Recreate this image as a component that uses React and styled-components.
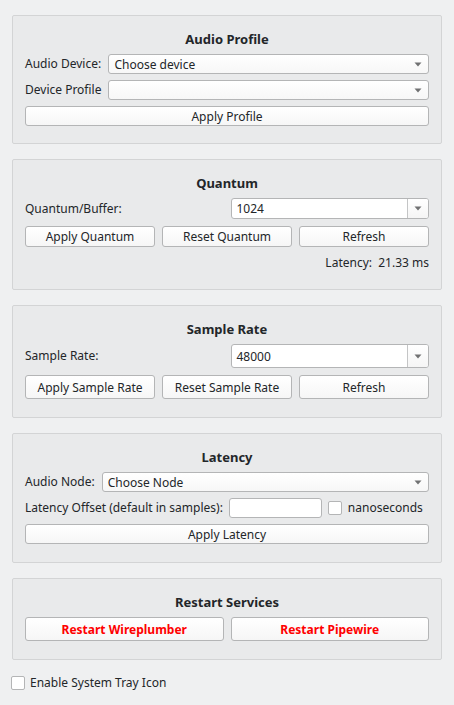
import React from "react";
import styled, { createGlobalStyle } from "styled-components";

const GlobalStyle = createGlobalStyle`
  html, body {
    margin: 0;
    padding: 0;
    background: #eff0f1;
  }
  body {
    font-family: "Noto Sans", "Open Sans", sans-serif;
    font-size: 12px;
    color: #232629;
  }
`;

const Window = styled.div`
  width: 454px;
  height: 705px;
  box-sizing: border-box;
  padding: 15px 12px 0 12px;
  display: flex;
  flex-direction: column;
  gap: 15px;
`;

const GroupBox = styled.section`
  background: #e9eaeb;
  border: 1px solid #d3d4d5;
  border-radius: 2px;
  padding: 15px 12px ${(p) => p.$pb || 18}px;
  display: flex;
  flex-direction: column;
  gap: 7px;
`;

const GroupTitle = styled.h3`
  margin: 0;
  font-size: 13px;
  font-weight: 700;
  line-height: 16px;
  text-align: center;
  color: #232629;
`;

const Stack = styled.div`
  display: flex;
  flex-direction: column;
  gap: ${(p) => p.$gap || 6}px;
`;

const FormGrid = styled.div`
  display: grid;
  grid-template-columns: auto 1fr;
  column-gap: 7px;
  row-gap: 6px;
  align-items: center;
`;

const Columns = styled.div`
  display: grid;
  grid-template-columns: repeat(${(p) => p.$cols}, 1fr);
  column-gap: 7px;
  align-items: center;
`;

const Row = styled.div`
  display: flex;
  align-items: center;
  gap: 6px;
  height: 20px;
`;

const Label = styled.span`
  white-space: nowrap;
  line-height: 16px;
`;

const control = `
  box-sizing: border-box;
  border: 1px solid #b4b5b6;
  border-radius: 3px;
  font-family: "Noto Sans", "Open Sans", sans-serif;
  font-size: 12px;
  color: #232629;
`;

const Button = styled.button`
  ${control}
  height: ${(p) => p.$h || 20}px;
  width: 100%;
  padding: 0 6px;
  background: linear-gradient(#ffffff, #f6f6f6);
  font-weight: ${(p) => (p.$danger ? 700 : 400)};
  color: ${(p) => (p.$danger ? "#ff0000" : "#232629")};
  white-space: nowrap;
`;

const ComboBox = styled.div`
  ${control}
  height: ${(p) => p.$h || 20}px;
  display: flex;
  align-items: center;
  padding-left: 5px;
  background: ${(p) => (p.$editable ? "#ffffff" : "linear-gradient(#ffffff, #f7f7f7)")};
  min-width: 0;
`;

const ComboText = styled.span`
  flex: 1;
  white-space: nowrap;
`;

const ArrowBox = styled.span`
  align-self: stretch;
  width: 20px;
  display: flex;
  align-items: center;
  justify-content: center;
  border-left: ${(p) => (p.$editable ? "1px solid #c4c5c6" : "none")};
  background: ${(p) => (p.$editable ? "linear-gradient(#ffffff, #f5f5f5)" : "transparent")};
  border-radius: 0 2px 2px 0;
`;

const TextInput = styled.div`
  ${control}
  height: 20px;
  width: 93px;
  background: #ffffff;
`;

const CheckBox = styled.span`
  box-sizing: border-box;
  width: 14px;
  height: 14px;
  border: 1px solid #b4b5b6;
  border-radius: 2px;
  background: #ffffff;
  flex: none;
`;

const Latency = styled.div`
  text-align: right;
  line-height: 16px;
  margin-top: 1px;
`;

const TrayRow = styled.label`
  display: flex;
  align-items: center;
  gap: 5px;
  margin-left: -1px;
`;

const Arrow = () => (
  <svg width="8" height="5" viewBox="0 0 8 5">
    <path d="M0.5 0.5 H7.5 L4 4.5 Z" fill="#707172" />
  </svg>
);

const Combo = ({ text, editable, h }) => (
  <ComboBox $editable={editable} $h={h}>
    <ComboText>{text}</ComboText>
    <ArrowBox $editable={editable}>
      <Arrow />
    </ArrowBox>
  </ComboBox>
);

const App = () => (
  <>
    <GlobalStyle />
    <Window>
      <GroupBox $pb={17}>
        <GroupTitle>Audio Profile</GroupTitle>
        <Stack>
          <FormGrid>
            <Label>Audio Device:</Label>
            <Combo text="Choose device" />
            <Label>Device Profile</Label>
            <Combo text="" />
          </FormGrid>
          <Button>Apply Profile</Button>
        </Stack>
      </GroupBox>

      <GroupBox>
        <GroupTitle>Quantum</GroupTitle>
        <Stack $gap={7}>
          <Columns $cols={2}>
            <Label>Quantum/Buffer:</Label>
            <Combo text="1024" editable h={21} />
          </Columns>
          <Columns $cols={3}>
            <Button $h={21}>Apply Quantum</Button>
            <Button $h={21}>Reset Quantum</Button>
            <Button $h={21}>Refresh</Button>
          </Columns>
          <Latency>Latency:&nbsp;&nbsp;21.33 ms</Latency>
        </Stack>
      </GroupBox>

      <GroupBox>
        <GroupTitle>Sample Rate</GroupTitle>
        <Stack $gap={7}>
          <Columns $cols={2}>
            <Label>Sample Rate:</Label>
            <Combo text="48000" editable h={24} />
          </Columns>
          <Columns $cols={3}>
            <Button $h={24}>Apply Sample Rate</Button>
            <Button $h={24}>Reset Sample Rate</Button>
            <Button $h={24}>Refresh</Button>
          </Columns>
        </Stack>
      </GroupBox>

      <GroupBox>
        <GroupTitle>Latency</GroupTitle>
        <Stack $gap={6}>
          <FormGrid>
            <Label>Audio Node:</Label>
            <Combo text="Choose Node" />
          </FormGrid>
          <Row>
            <Label>Latency Offset (default in samples):</Label>
            <TextInput />
            <CheckBox />
            <Label>nanoseconds</Label>
          </Row>
          <Button>Apply Latency</Button>
        </Stack>
      </GroupBox>

      <GroupBox>
        <GroupTitle>Restart Services</GroupTitle>
        <Columns $cols={2}>
          <Button $h={24} $danger>
            Restart Wireplumber
          </Button>
          <Button $h={24} $danger>
            Restart Pipewire
          </Button>
        </Columns>
      </GroupBox>

      <TrayRow>
        <CheckBox />
        <Label>Enable System Tray Icon</Label>
      </TrayRow>
    </Window>
  </>
);

export default App;
